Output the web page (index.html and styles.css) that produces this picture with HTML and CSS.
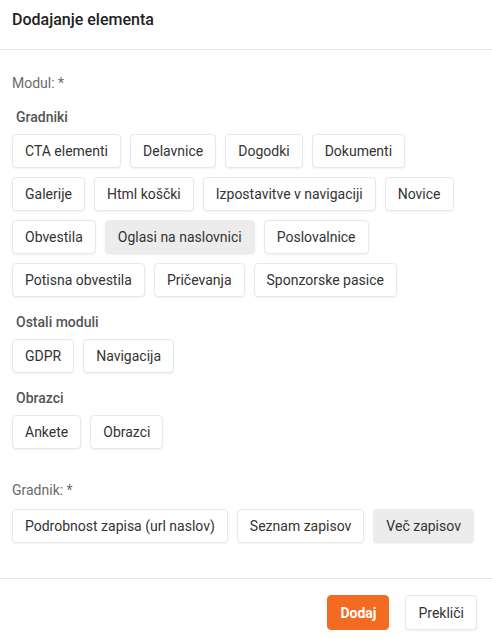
FILE: index.html
```html
<!DOCTYPE html>
<html lang="sl">
<head>
    <meta charset="UTF-8">
    <meta name="viewport" content="width=device-width, initial-scale=1.0">
    <title>Dodajanje elementa</title>
    <link rel="stylesheet" href="styles.css">
</head>
<body>
    <div class="modal">
        <div class="modal-header">
            <h2>Dodajanje elementa</h2>
        </div>
        <div class="modal-body">
            <label class="field-label">Modul: *</label>
            <div class="group">
                <h3>Gradniki</h3>
                <div class="options">
                    <button class="option">CTA elementi</button>
                    <button class="option">Delavnice</button>
                    <button class="option">Dogodki</button>
                    <button class="option">Dokumenti</button>
                    <button class="option">Galerije</button>
                    <button class="option">Html koščki</button>
                    <button class="option">Izpostavitve v navigaciji</button>
                    <button class="option">Novice</button>
                    <button class="option">Obvestila</button>
                    <button class="option selected">Oglasi na naslovnici</button>
                    <button class="option">Poslovalnice</button>
                    <button class="option">Potisna obvestila</button>
                    <button class="option">Pričevanja</button>
                    <button class="option">Sponzorske pasice</button>
                </div>
            </div>
            <div class="group">
                <h3>Ostali moduli</h3>
                <div class="options">
                    <button class="option">GDPR</button>
                    <button class="option">Navigacija</button>
                </div>
            </div>
            <div class="group">
                <h3>Obrazci</h3>
                <div class="options">
                    <button class="option">Ankete</button>
                    <button class="option">Obrazci</button>
                </div>
            </div>

            <label class="field-label second">Gradnik: *</label>
            <div class="options">
                <button class="option">Podrobnost zapisa (url naslov)</button>
                <button class="option">Seznam zapisov</button>
                <button class="option selected">Več zapisov</button>
            </div>
        </div>
        <div class="modal-footer">
            <button class="btn btn-primary">Dodaj</button>
            <button class="btn btn-default">Prekliči</button>
        </div>
    </div>
</body>
</html>
```

FILE: styles.css
```css
* {
    margin: 0;
    padding: 0;
    box-sizing: border-box;
}

body {
    font-family: Roboto, 'Liberation Sans', sans-serif;
    background: #fff;
    color: #333;
}

.modal {
    width: 492px;
    background: #fff;
}

.modal-header {
    height: 50px;
    padding: 9px 12px 0;
    border-bottom: 1px solid #e6e6e6;
}

.modal-header h2 {
    font-size: 16px;
    font-weight: 500;
    color: #222;
    line-height: 22px;
}

.modal-body {
    padding: 23px 12px 35px;
}

.field-label {
    display: block;
    font-size: 14px;
    line-height: 20px;
    color: #6b6b6b;
    margin-bottom: 14px;
}

.field-label.second {
    margin-top: 31px;
    margin-bottom: 9px;
}

.group {
    margin-bottom: 15px;
}

.group h3 {
    font-size: 14px;
    font-weight: 500;
    line-height: 20px;
    color: #555;
    padding-left: 4px;
    margin-bottom: 7px;
}

.options {
    display: flex;
    flex-wrap: wrap;
    gap: 9px;
}

.option {
    height: 34px;
    padding: 0 12px;
    font-family: inherit;
    font-size: 14px;
    color: #333;
    background: #fff;
    border: 1px solid #e8e8e8;
    border-radius: 4px;
    box-shadow: 0 1px 2px rgba(0, 0, 0, 0.06);
    cursor: pointer;
}

.option.selected {
    background: #ececec;
    border-color: #ececec;
}

.modal-footer {
    display: flex;
    justify-content: flex-end;
    gap: 16px;
    padding: 16px 15px;
    border-top: 1px solid #e6e6e6;
}

.btn {
    height: 35px;
    padding: 0 12px;
    font-family: inherit;
    font-size: 14px;
    border-radius: 4px;
    cursor: pointer;
}

.btn-primary {
    background: #f36b21;
    border: 1px solid #f36b21;
    color: #fff;
    font-weight: 700;
}

.btn-default {
    background: #fff;
    border: 1px solid #e8e8e8;
    color: #333;
    box-shadow: 0 1px 2px rgba(0, 0, 0, 0.06);
}
```
